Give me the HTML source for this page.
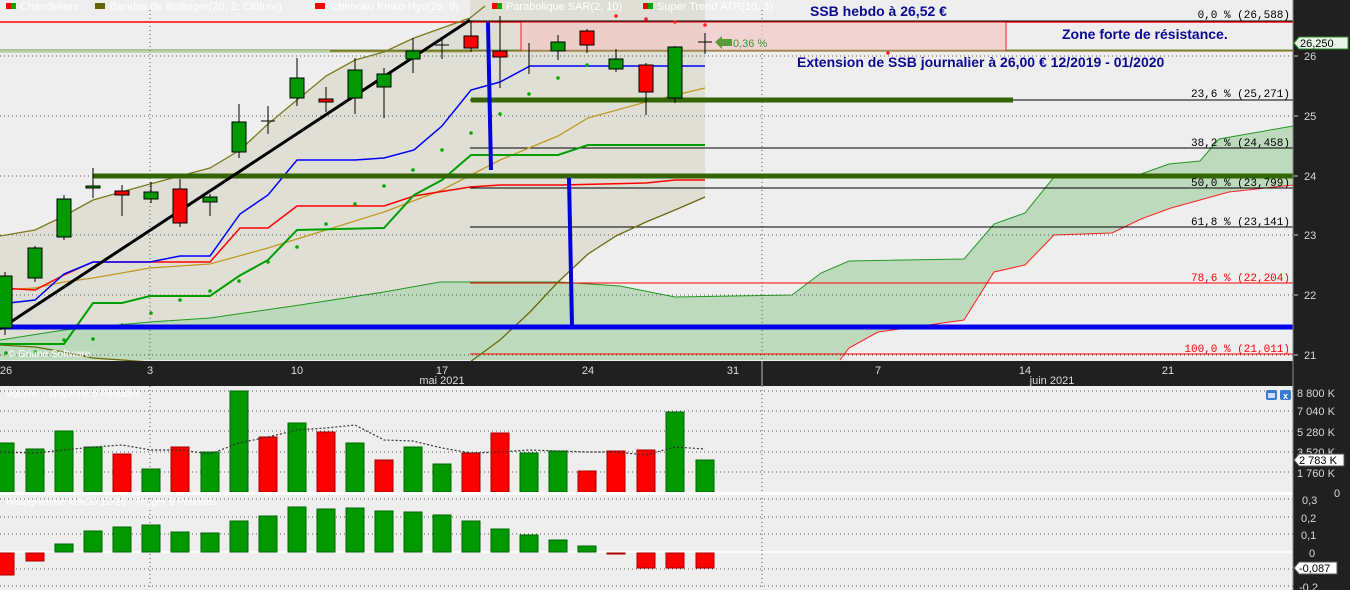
<!DOCTYPE html>
<html><head><meta charset="utf-8"><style>
html,body{margin:0;padding:0;background:#eeeeee;width:1350px;height:590px;overflow:hidden}
svg{display:block;font-family:"Liberation Sans","DejaVu Sans",sans-serif}
</style></head><body>
<svg width="1350" height="590" viewBox="0 0 1350 590" xmlns="http://www.w3.org/2000/svg">
<rect x="0" y="0" width="1350" height="590" fill="#eeeeee"/>
<!-- bollinger shade -->
<polygon points="0,236 35,230 64,216 93,200 150,184 210,168 240,150 268,124 297,100 326,76 355,60 384,52 414,38 442,28 470,18 470,0 705,0 705,197 675,210 646,222 616,236 588,254 558,282 530,312 500,340 470,360 150,360 93,350 35,342 0,340" fill="#dfdfd6"/>
<!-- cloud -->
<polygon points="0,340 64,330 150,322 210,318 300,305 384,292 440,282 560,282 620,286 675,297 792,295 821,273 849,261 964,259 994,224 1025,213 1054,177 1141,174 1169,164 1200,161 1219,139 1293,126 1293,185 1229,192 1171,208 1141,219 1112,233 1054,235 1025,265 994,272 964,320 878,332 849,348 840,360 0,360" fill="#b9d8b9" opacity="0.92"/>
<polyline points="0,340 64,330 150,322 210,318 300,305 384,292 440,282 560,282 620,286 675,297 792,295 821,273 849,261 964,259 994,224 1025,213 1054,177 1141,174 1169,164 1200,161 1219,139 1293,126" fill="none" stroke="#229922" stroke-width="1"/>
<polyline points="840,360 849,348 878,332 964,320 994,272 1025,265 1054,235 1112,233 1141,219 1171,208 1229,192 1293,185" fill="none" stroke="#ff2020" stroke-width="1"/>
<!-- grid -->
<g stroke="#555" stroke-width="1" stroke-dasharray="1,3">
<line x1="0" y1="56" x2="1293" y2="56"/><line x1="0" y1="116" x2="1293" y2="116"/><line x1="0" y1="176" x2="1293" y2="176"/><line x1="0" y1="235" x2="1293" y2="235"/><line x1="0" y1="295" x2="1293" y2="295"/><line x1="0" y1="355" x2="1293" y2="355"/>
<line x1="150" y1="10" x2="150" y2="360"/><line x1="762" y1="10" x2="762" y2="360"/>
<line x1="0" y1="391" x2="1293" y2="391"/><line x1="0" y1="411" x2="1293" y2="411"/><line x1="0" y1="431" x2="1293" y2="431"/><line x1="0" y1="452" x2="1293" y2="452"/><line x1="0" y1="472" x2="1293" y2="472"/>
<line x1="0" y1="499" x2="1293" y2="499"/><line x1="0" y1="517" x2="1293" y2="517"/><line x1="0" y1="534" x2="1293" y2="534"/><line x1="0" y1="569" x2="1293" y2="569"/><line x1="0" y1="586" x2="1293" y2="586"/>
<line x1="150" y1="386" x2="150" y2="590"/><line x1="762" y1="386" x2="762" y2="590"/>
</g>
<!-- fib lines -->
<line x1="0" y1="22" x2="1293" y2="22" stroke="#ff0000" stroke-width="1.5"/>
<line x1="470" y1="21" x2="1293" y2="21" stroke="#000" stroke-width="1"/>
<line x1="470" y1="100" x2="1293" y2="100" stroke="#000"/>
<line x1="470" y1="148" x2="1293" y2="148" stroke="#000"/>
<line x1="470" y1="188" x2="1293" y2="188" stroke="#000"/>
<line x1="470" y1="227" x2="1293" y2="227" stroke="#000"/>
<line x1="470" y1="283" x2="1293" y2="283" stroke="#ff0000"/>
<line x1="470" y1="354" x2="1293" y2="354" stroke="#ff0000"/>
<line x1="0" y1="50" x2="1293" y2="50" stroke="#6a9a40" stroke-width="1"/>
<line x1="0" y1="52" x2="470" y2="52" stroke="#9ab870" stroke-width="1"/>
<!-- resistance zone -->
<rect x="521" y="22" width="485" height="29" fill="#f2c4c4" fill-opacity="0.65" stroke="#ee2222" stroke-width="1"/>
<line x1="330" y1="51" x2="1293" y2="51" stroke="#8a5a10" stroke-width="1"/>
<!-- bollinger lines -->
<polyline points="0,236 35,230 64,216 93,200 150,184 210,168 240,150 268,124 297,100 326,76 355,60 384,52 414,38 442,28 470,18 485,6" fill="none" stroke="#7a7a20" stroke-width="1.3"/>
<polyline points="0,345 35,347 64,352 93,358 150,362" fill="none" stroke="#6a6a10" stroke-width="1.3"/>
<polyline points="470,362 500,340 530,312 558,282 588,254 616,236 646,222 675,210 705,197" fill="none" stroke="#6a6a10" stroke-width="1.3"/>
<polyline points="0,290 35,288 64,282 93,278 150,268 210,264 268,248 326,230 384,212 442,190 500,160 558,136 588,118 646,102 705,88" fill="none" stroke="#c09a20" stroke-width="1.3"/>
<!-- kijun / tenkan / chikou -->
<polyline points="0,288 35,290 64,275 93,262 210,262 240,228 268,228 297,206 384,206 414,196 470,187 500,185 560,185 646,183 675,180 705,180" fill="none" stroke="#ff0000" stroke-width="1.5"/>
<polyline points="0,304 35,300 64,274 93,262 150,262 180,256 210,256 240,214 268,195 297,160 355,160 384,158 414,150 442,126 471,90 500,82 530,66 705,66" fill="none" stroke="#0000ff" stroke-width="1.5"/>
<polyline points="0,344 64,344 93,303 122,303 150,296 210,296 239,276 268,260 297,230 384,228 414,195 442,180 471,155 558,155 588,145 705,145" fill="none" stroke="#00a000" stroke-width="2"/>
<!-- SAR dots -->
<g fill="#00aa00">
<circle cx="6" cy="353" r="1.8"/><circle cx="35" cy="352" r="1.8"/><circle cx="64" cy="340" r="1.8"/><circle cx="93" cy="339" r="1.8"/><circle cx="122" cy="325" r="1.8"/><circle cx="151" cy="313" r="1.8"/><circle cx="180" cy="300" r="1.8"/><circle cx="210" cy="291" r="1.8"/><circle cx="239" cy="281" r="1.8"/><circle cx="268" cy="262" r="1.8"/><circle cx="297" cy="247" r="1.8"/><circle cx="326" cy="224" r="1.8"/><circle cx="355" cy="204" r="1.8"/><circle cx="384" cy="186" r="1.8"/><circle cx="413" cy="170" r="1.8"/><circle cx="442" cy="150" r="1.8"/><circle cx="471" cy="133" r="1.8"/><circle cx="500" cy="114" r="1.8"/><circle cx="529" cy="94" r="1.8"/><circle cx="558" cy="78" r="1.8"/><circle cx="587" cy="65" r="1.8"/>
</g>
<g fill="#ff2020"><circle cx="616" cy="16" r="1.8"/><circle cx="646" cy="19" r="1.8"/><circle cx="675" cy="22" r="1.8"/><circle cx="705" cy="25" r="1.8"/><circle cx="888" cy="53" r="1.8"/></g>
<!-- thick lines -->
<line x1="93" y1="176" x2="1293" y2="176" stroke="#336600" stroke-width="5"/>
<line x1="471" y1="100" x2="1013" y2="100" stroke="#336600" stroke-width="5"/>
<line x1="0" y1="327" x2="1293" y2="327" stroke="#0000ee" stroke-width="5"/>
<line x1="488" y1="22" x2="491" y2="170" stroke="#0000dd" stroke-width="4"/>
<line x1="569" y1="178" x2="572" y2="325" stroke="#0000dd" stroke-width="4"/>
<line x1="0" y1="329" x2="470" y2="20" stroke="#000" stroke-width="3"/>
<!-- candles -->
<g stroke="#000" stroke-width="1">
<line x1="5" y1="272" x2="5" y2="335"/><rect x="-2" y="276" width="14" height="52" fill="#009900"/>
<line x1="35" y1="246" x2="35" y2="282"/><rect x="28" y="248" width="14" height="30" fill="#009900"/>
<line x1="64" y1="195" x2="64" y2="240"/><rect x="57" y="199" width="14" height="38" fill="#009900"/>
<line x1="93" y1="168" x2="93" y2="198"/><rect x="86" y="186" width="14" height="2" fill="#009900"/>
<line x1="122" y1="185" x2="122" y2="216"/><rect x="115" y="191" width="14" height="4" fill="#ff0000"/>
<line x1="151" y1="182" x2="151" y2="203"/><rect x="144" y="192" width="14" height="7" fill="#009900"/>
<line x1="180" y1="179" x2="180" y2="227"/><rect x="173" y="189" width="14" height="34" fill="#ff0000"/>
<line x1="210" y1="194" x2="210" y2="216"/><rect x="203" y="197" width="14" height="5" fill="#009900"/>
<line x1="239" y1="104" x2="239" y2="158"/><rect x="232" y="122" width="14" height="30" fill="#009900"/>
<line x1="268" y1="106" x2="268" y2="134"/><line x1="261" y1="121" x2="275" y2="121"/>
<line x1="297" y1="58" x2="297" y2="106"/><rect x="290" y="78" width="14" height="20" fill="#009900"/>
<line x1="326" y1="87" x2="326" y2="112"/><rect x="319" y="99" width="14" height="3" fill="#ff0000"/>
<line x1="355" y1="58" x2="355" y2="114"/><rect x="348" y="70" width="14" height="28" fill="#009900"/>
<line x1="384" y1="68" x2="384" y2="118"/><rect x="377" y="74" width="14" height="13" fill="#009900"/>
<line x1="413" y1="38" x2="413" y2="73"/><rect x="406" y="51" width="14" height="8" fill="#009900"/>
<line x1="442" y1="40" x2="442" y2="59"/><line x1="435" y1="45" x2="449" y2="45"/>
<line x1="471" y1="21" x2="471" y2="52"/><rect x="464" y="36" width="14" height="12" fill="#ff0000"/>
<line x1="500" y1="16" x2="500" y2="88"/><rect x="493" y="51" width="14" height="6" fill="#ff0000"/>
<line x1="529" y1="43" x2="529" y2="74"/>
<line x1="558" y1="35" x2="558" y2="60"/><rect x="551" y="42" width="14" height="9" fill="#009900"/>
<line x1="587" y1="29" x2="587" y2="53"/><rect x="580" y="31" width="14" height="14" fill="#ff0000"/>
<line x1="616" y1="49" x2="616" y2="72"/><rect x="609" y="59" width="14" height="10" fill="#009900"/>
<line x1="646" y1="63" x2="646" y2="115"/><rect x="639" y="65" width="14" height="27" fill="#ff0000"/>
<line x1="675" y1="46" x2="675" y2="103"/><rect x="668" y="47" width="14" height="51" fill="#009900"/>
<line x1="705" y1="33" x2="705" y2="54"/><line x1="698" y1="42" x2="712" y2="42"/>
</g>
<!-- arrow & annotations -->
<polygon points="715,42 722,36 722,39 732,39 732,46 722,46 722,49" fill="#5a9a3a"/>
<text x="733" y="47" font-size="11" fill="#339933">0,36 %</text>
<text x="810" y="16" font-size="14" font-weight="bold" fill="#0a0a90">SSB hebdo à 26,52 €</text>
<text x="1062" y="39" font-size="14" font-weight="bold" fill="#0a0a90">Zone forte de résistance.</text>
<text x="797" y="67" font-size="14" font-weight="bold" fill="#0a0a90">Extension de SSB journalier à 26,00 € 12/2019 - 01/2020</text>
<g font-family="Liberation Mono,monospace" font-size="11" text-anchor="end">
<text x="1290" y="18" fill="#000">0,0 % (26,588)</text>
<text x="1290" y="97" fill="#000">23,6 % (25,271)</text>
<text x="1290" y="146" fill="#000">38,2 % (24,458)</text>
<text x="1290" y="186" fill="#000">50,0 % (23,799)</text>
<text x="1290" y="225" fill="#000">61,8 % (23,141)</text>
<text x="1290" y="281" fill="#ff0000">78,6 % (22,204)</text>
<text x="1290" y="352" fill="#ff0000">100,0 % (21,011)</text>
</g>
<!-- legend -->
<g font-size="11" fill="#ffffff">
<rect x="6" y="3" width="5" height="6" fill="#ff0000"/><rect x="11" y="3" width="5" height="6" fill="#00aa00"/><text x="20" y="10">Chandeliers</text>
<rect x="95" y="3" width="10" height="6" fill="#666600"/><text x="110" y="10">Bandes de Bollinger(20, 2, Clôture)</text>
<rect x="315" y="3" width="10" height="6" fill="#ff0000"/><text x="330" y="10">Ichimoku Kinko Hyo(26, 9)</text>
<rect x="492" y="3" width="5" height="6" fill="#ff0000"/><rect x="497" y="3" width="5" height="6" fill="#00aa00"/><text x="506" y="10">Parabolique SAR(2, 10)</text>
<rect x="643" y="3" width="5" height="6" fill="#ff0000"/><rect x="648" y="3" width="5" height="6" fill="#00aa00"/><text x="657" y="10">Super Trend ATR(10, 3)</text>
<text x="8" y="357" font-size="10">© Griane Software</text>
</g>
<!-- date axis -->
<rect x="0" y="361" width="1293" height="25" fill="#202020"/>
<line x1="762" y1="361" x2="762" y2="386" stroke="#bbb"/>
<g font-size="11" fill="#dddddd" text-anchor="middle">
<text x="6" y="374">26</text><text x="150" y="374">3</text><text x="297" y="374">10</text><text x="442" y="374">17</text><text x="588" y="374">24</text><text x="733" y="374">31</text><text x="878" y="374">7</text><text x="1025" y="374">14</text><text x="1168" y="374">21</text>
<text x="442" y="384">mai 2021</text><text x="1052" y="384">juin 2021</text>
</g>
<!-- volume -->
<text x="6" y="397" font-size="10" fill="#ffffff">Volume - Moyenne 5 Périodes</text>
<g stroke="#006600" stroke-width="1">
<rect x="-4" y="443" width="18" height="49" fill="#009900"/>
<rect x="26" y="449" width="18" height="43" fill="#009900"/>
<rect x="55" y="431" width="18" height="61" fill="#009900"/>
<rect x="84" y="447" width="18" height="45" fill="#009900"/>
<rect x="113" y="454" width="18" height="38" fill="#ff0000" stroke="#aa0000"/>
<rect x="142" y="469" width="18" height="23" fill="#009900"/>
<rect x="171" y="447" width="18" height="45" fill="#ff0000" stroke="#aa0000"/>
<rect x="201" y="452" width="18" height="40" fill="#009900"/>
<rect x="230" y="391" width="18" height="101" fill="#009900"/>
<rect x="259" y="437" width="18" height="55" fill="#ff0000" stroke="#aa0000"/>
<rect x="288" y="423" width="18" height="69" fill="#009900"/>
<rect x="317" y="432" width="18" height="60" fill="#ff0000" stroke="#aa0000"/>
<rect x="346" y="443" width="18" height="49" fill="#009900"/>
<rect x="375" y="460" width="18" height="32" fill="#ff0000" stroke="#aa0000"/>
<rect x="404" y="447" width="18" height="45" fill="#009900"/>
<rect x="433" y="464" width="18" height="28" fill="#009900"/>
<rect x="462" y="453" width="18" height="39" fill="#ff0000" stroke="#aa0000"/>
<rect x="491" y="433" width="18" height="59" fill="#ff0000" stroke="#aa0000"/>
<rect x="520" y="453" width="18" height="39" fill="#009900"/>
<rect x="549" y="451" width="18" height="41" fill="#009900"/>
<rect x="578" y="471" width="18" height="21" fill="#ff0000" stroke="#aa0000"/>
<rect x="607" y="451" width="18" height="41" fill="#ff0000" stroke="#aa0000"/>
<rect x="637" y="450" width="18" height="42" fill="#ff0000" stroke="#aa0000"/>
<rect x="666" y="412" width="18" height="80" fill="#009900"/>
<rect x="696" y="460" width="18" height="32" fill="#009900"/>
</g>
<polyline points="0,452 35,453 64,450 93,447 122,445 151,450 180,450 210,454 239,443 268,437 297,430 326,428 355,425 384,440 413,441 442,448 471,453 500,452 529,450 558,451 587,452 616,452 646,455 675,447 705,449" fill="none" stroke="#333" stroke-width="1.2" stroke-dasharray="2,2"/>
<rect x="0" y="492" width="1293" height="3" fill="#ffffff"/>
<!-- macd -->
<text x="6" y="505" font-size="10" fill="#ffffff">Histogramme MACD 12-26 - Trigger 9 Périodes</text>
<line x1="0" y1="552" x2="1293" y2="552" stroke="#fff" stroke-width="1.5"/>
<g stroke="#006600" stroke-width="1">
<rect x="-4" y="553" width="18" height="22" fill="#ff0000" stroke="#aa0000"/>
<rect x="26" y="553" width="18" height="8" fill="#ff0000" stroke="#aa0000"/>
<rect x="55" y="544" width="18" height="8" fill="#009900"/>
<rect x="84" y="531" width="18" height="21" fill="#009900"/>
<rect x="113" y="527" width="18" height="25" fill="#009900"/>
<rect x="142" y="525" width="18" height="27" fill="#009900"/>
<rect x="171" y="532" width="18" height="20" fill="#009900"/>
<rect x="201" y="533" width="18" height="19" fill="#009900"/>
<rect x="230" y="521" width="18" height="31" fill="#009900"/>
<rect x="259" y="516" width="18" height="36" fill="#009900"/>
<rect x="288" y="507" width="18" height="45" fill="#009900"/>
<rect x="317" y="509" width="18" height="43" fill="#009900"/>
<rect x="346" y="508" width="18" height="44" fill="#009900"/>
<rect x="375" y="511" width="18" height="41" fill="#009900"/>
<rect x="404" y="512" width="18" height="40" fill="#009900"/>
<rect x="433" y="515" width="18" height="37" fill="#009900"/>
<rect x="462" y="521" width="18" height="31" fill="#009900"/>
<rect x="491" y="529" width="18" height="23" fill="#009900"/>
<rect x="520" y="535" width="18" height="17" fill="#009900"/>
<rect x="549" y="540" width="18" height="12" fill="#009900"/>
<rect x="578" y="546" width="18" height="6" fill="#009900"/>
<rect x="607" y="553" width="18" height="1" fill="#ff0000" stroke="#aa0000"/>
<rect x="637" y="553" width="18" height="15" fill="#ff0000" stroke="#aa0000"/>
<rect x="666" y="553" width="18" height="15" fill="#ff0000" stroke="#aa0000"/>
<rect x="696" y="553" width="18" height="15" fill="#ff0000" stroke="#aa0000"/>
</g>
<!-- panel buttons -->
<rect x="1266" y="390" width="11" height="10" rx="2" fill="#3a7ad0"/><rect x="1268" y="393" width="7" height="5" fill="#cfe0f5"/>
<rect x="1280" y="390" width="11" height="10" rx="2" fill="#3a7ad0"/><text x="1285.5" y="399" font-size="9" fill="#fff" text-anchor="middle" font-weight="bold">x</text>
<!-- right axis -->
<rect x="1293" y="0" width="57" height="590" fill="#202020"/>
<line x1="1293" y1="0" x2="1293" y2="590" stroke="#888"/>
<g font-size="11" fill="#d8d8d8">
<text x="1304" y="60">26</text><text x="1304" y="120">25</text><text x="1304" y="180">24</text><text x="1304" y="239">23</text><text x="1304" y="299">22</text><text x="1304" y="359">21</text>
<text x="1297" y="397">8 800 K</text><text x="1297" y="415">7 040 K</text><text x="1297" y="436">5 280 K</text><text x="1297" y="456">3 520 K</text><text x="1297" y="477">1 760 K</text><text x="1334" y="497">0</text>
<text x="1302" y="504">0,3</text><text x="1301" y="522">0,2</text><text x="1301" y="539">0,1</text><text x="1309" y="557">0</text><text x="1299" y="591">-0,2</text>
</g>
<g stroke="#ccc"><line x1="1294" y1="56" x2="1298" y2="56"/><line x1="1294" y1="116" x2="1298" y2="116"/><line x1="1294" y1="176" x2="1298" y2="176"/><line x1="1294" y1="235" x2="1298" y2="235"/><line x1="1294" y1="295" x2="1298" y2="295"/><line x1="1294" y1="355" x2="1298" y2="355"/></g>
<polygon points="1294,43 1299,37 1348,37 1348,49 1299,49" fill="#e8f4e8" stroke="#2a8a2a"/>
<text x="1300" y="47" font-size="11" fill="#000">26,250</text>
<polygon points="1294,460 1299,454 1344,454 1344,466 1299,466" fill="#ffffff" stroke="#555"/>
<text x="1299" y="464" font-size="11" fill="#000">2 783 K</text>
<polygon points="1294,568 1299,562 1337,562 1337,574 1299,574" fill="#ffffff" stroke="#555"/>
<text x="1299" y="572" font-size="11" fill="#000">-0,087</text>
</svg>
</body></html>
